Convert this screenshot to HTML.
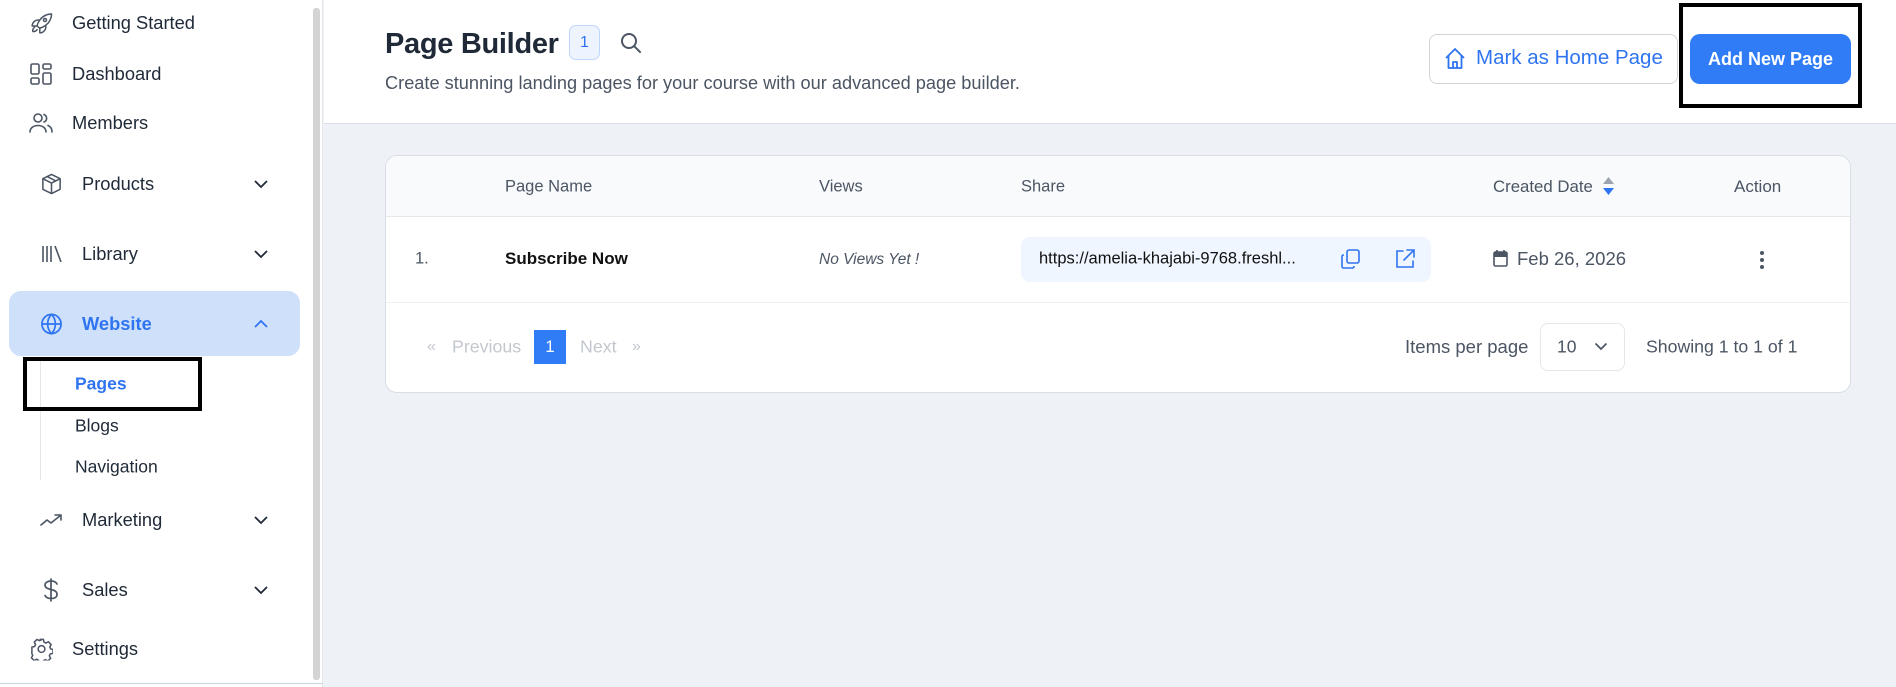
<!DOCTYPE html>
<html><head><meta charset="utf-8">
<style>
*{box-sizing:border-box;margin:0;padding:0}
body{width:1896px;height:687px;overflow:hidden;font-family:"Liberation Sans",sans-serif;background:#eef1f5;position:relative;color:#1f2937}
.a{position:absolute;white-space:nowrap}
.side{position:absolute;left:0;top:0;width:323px;height:687px;background:#fff;border-right:1px solid #e5e7eb}
.si{position:absolute;font-size:18.3px;font-weight:500;color:#1f2937;transform:translateY(-50%)}
.ic{position:absolute;transform:translateY(-50%)}
svg{display:block}
.chev{position:absolute;left:253px;transform:translateY(-50%)}
.th{font-size:16.5px;color:#4b5563;transform:translateY(-50%)}
</style></head><body>
<div class="side">
  <div style="position:absolute;left:313px;top:8px;width:7px;height:672px;background:#d4d4d4;border-radius:3px"></div>

  <svg class="ic" style="left:30px;top:23px" width="24" height="24" viewBox="0 0 24 24" fill="none" stroke="#4b5563" stroke-width="1.5" stroke-linecap="round" stroke-linejoin="round"><path d="M15.6 14.4a6 6 0 01-5.8 7.5v-4.8m5.8-2.7A14.9 14.9 0 0021.6 3 14.9 14.9 0 009.6 9.2m6 5.2a15 15 0 01-5.9 2.7m0-7.9a6 6 0 00-7.5 5.8h4.8m2.7-5.8a15 15 0 00-2.7 5.9m2.8 2A15 15 0 017 15m-2.4 1.2a4.5 4.5 0 00-1.8 4.3 4.5 4.5 0 004.3-1.8"/><circle cx="15" cy="9" r="1.5"/></svg>
  <div class="si" style="left:72px;top:23px">Getting Started</div>

  <svg class="ic" style="left:30px;top:74px" width="22" height="22" viewBox="0 0 22 22" fill="none" stroke="#4b5563" stroke-width="1.6"><rect x="1" y="1" width="8" height="10" rx="1.5"/><rect x="13" y="1" width="8" height="5" rx="1.5"/><rect x="1" y="15" width="8" height="6" rx="1.5"/><rect x="13" y="10" width="8" height="11" rx="1.5"/></svg>
  <div class="si" style="left:72px;top:74px">Dashboard</div>

  <svg class="ic" style="left:29px;top:123px" width="24" height="22" viewBox="0 0 24 22" fill="none" stroke="#4b5563" stroke-width="1.6" stroke-linecap="round"><circle cx="9" cy="6" r="4"/><path d="M1 20c0-4 3.5-6.5 8-6.5s8 2.5 8 6.5"/><path d="M15 2.5a4 4 0 010 7.5M19 13.5c2.5 1 4 3 4 6.5"/></svg>
  <div class="si" style="left:72px;top:123px">Members</div>

  <svg class="ic" style="left:40px;top:184px" width="23" height="23" viewBox="0 0 24 24" fill="none" stroke="#4b5563" stroke-width="1.6" stroke-linejoin="round"><path d="M12 2l9 4.5v11L12 22l-9-4.5v-11z"/><path d="M3 6.5L12 11l9-4.5M12 11v11M7.5 4.3l9 4.5"/></svg>
  <div class="si" style="left:82px;top:184px">Products</div>
  <svg class="chev" style="top:184px" width="16" height="10" viewBox="0 0 16 10" fill="none" stroke="#1f2937" stroke-width="1.8"><path d="M2 2l6 6 6-6"/></svg>

  <svg class="ic" style="left:41px;top:254px" width="22" height="18" viewBox="0 0 22 18" fill="none" stroke="#4b5563" stroke-width="1.6"><path d="M2 1v16M6 1v16M10 1v16M14 1l6 16"/></svg>
  <div class="si" style="left:82px;top:254px">Library</div>
  <svg class="chev" style="top:254px" width="16" height="10" viewBox="0 0 16 10" fill="none" stroke="#1f2937" stroke-width="1.8"><path d="M2 2l6 6 6-6"/></svg>

  <div style="position:absolute;left:9px;top:291px;width:291px;height:65px;background:#cfe0fb;border-radius:12px"></div>
  <svg class="ic" style="left:40px;top:324px" width="23" height="23" viewBox="0 0 24 24" fill="none" stroke="#2f74f0" stroke-width="1.8"><circle cx="12" cy="12" r="10"/><path d="M2 12h20M12 2c3 3 4 6.5 4 10s-1 7-4 10c-3-3-4-6.5-4-10s1-7 4-10z"/></svg>
  <div class="si" style="left:82px;top:324px;color:#2f74f0;font-weight:700">Website</div>
  <svg class="chev" style="top:324px" width="16" height="10" viewBox="0 0 16 10" fill="none" stroke="#2f74f0" stroke-width="1.8"><path d="M2 8l6-6 6 6"/></svg>

  <div style="position:absolute;left:40px;top:360px;width:1px;height:120px;background:#e5e7eb"></div>
  <div style="position:absolute;left:23px;top:357px;width:179px;height:54px;border:4px solid #000"></div>
  <div class="si" style="left:75px;top:384px;color:#2f74f0;font-weight:700;font-size:17.5px">Pages</div>
  <div class="si" style="left:75px;top:426px;font-size:17.5px">Blogs</div>
  <div class="si" style="left:75px;top:467px;font-size:17.5px">Navigation</div>

  <svg class="ic" style="left:40px;top:520px" width="24" height="14" viewBox="0 0 24 14" fill="none" stroke="#4b5563" stroke-width="1.6" stroke-linecap="round" stroke-linejoin="round"><path d="M1 12l6-5 4 3 10-8M15 2h6v5"/></svg>
  <div class="si" style="left:82px;top:520px">Marketing</div>
  <svg class="chev" style="top:520px" width="16" height="10" viewBox="0 0 16 10" fill="none" stroke="#1f2937" stroke-width="1.8"><path d="M2 2l6 6 6-6"/></svg>

  <svg class="ic" style="left:43px;top:590px" width="16" height="24" viewBox="0 0 16 24" fill="none" stroke="#4b5563" stroke-width="1.7" stroke-linecap="round"><path d="M8 1v22M14 6c-1-2-3-3-6-3S2 4.5 2 7s2 3.5 6 4.5 6 2 6 5-3 4-6 4-5-1-6-3"/></svg>
  <div class="si" style="left:82px;top:590px">Sales</div>
  <svg class="chev" style="top:590px" width="16" height="10" viewBox="0 0 16 10" fill="none" stroke="#1f2937" stroke-width="1.8"><path d="M2 2l6 6 6-6"/></svg>

  <svg class="ic" style="left:30px;top:649px" width="23" height="23" viewBox="0 0 24 24" fill="none" stroke="#4b5563" stroke-width="1.6"><path d="M10 2h4l.6 2.8 2 1 2.6-1.3 2.8 2.8-1.3 2.6.9 2 2.4.6v4l-2.8.6-1 2 1.3 2.6-2.8 2.8-2.6-1.3-2 .9-.6 2.4h-4l-.6-2.8-2-1-2.6 1.3-2.8-2.8 1.3-2.6-.9-2L2 14v-4l2.8-.6 1-2L4.5 4.8l2.8-2.8 2.6 1.3 2-.9z"/><circle cx="12" cy="12" r="3.5"/></svg>
  <div class="si" style="left:72px;top:649px">Settings</div>
  <div style="position:absolute;left:0;top:683px;width:323px;height:1px;background:#d1d5db"></div>
</div>

<!-- header -->
<div style="position:absolute;left:324px;top:0;width:1572px;height:124px;background:#fff;border-bottom:1px solid #d9dee6"></div>
<div class="a" style="left:385px;top:28px;font-size:29px;font-weight:700;color:#1f2937;letter-spacing:-0.3px">Page Builder</div>
<div class="a" style="left:569px;top:25px;width:31px;height:35px;border:1px solid #bfd6fb;background:#eef4ff;border-radius:7px;color:#2f74f0;font-size:16px;text-align:center;line-height:33px">1</div>
<svg class="a" style="left:620px;top:32px" width="22" height="22" viewBox="0 0 22 22" fill="none" stroke="#4b5563" stroke-width="2" stroke-linecap="round"><circle cx="9" cy="9" r="7"/><path d="M14 14l6 6"/></svg>
<div class="a" style="left:385px;top:73px;font-size:18.2px;color:#4b5563">Create stunning landing pages for your course with our advanced page builder.</div>

<div class="a" style="left:1429px;top:34px;width:249px;height:50px;border:1px solid #d1d5db;border-radius:8px;background:#fff"></div>
<svg class="a" style="left:1444px;top:47px" width="22" height="23" viewBox="0 0 22 23" fill="none" stroke="#2f74f0" stroke-width="1.8" stroke-linejoin="round"><path d="M2 11L11 2l9 9M4.5 9v12h13V9M9 21v-6h4v6"/></svg>
<div class="a" style="left:1476px;top:46px;font-size:20.5px;color:#2f74f0">Mark as Home Page</div>
<div class="a" style="left:1690px;top:34px;width:161px;height:50px;border-radius:10px;background:#2f7cf6;color:#fff;font-weight:700;font-size:18px;text-align:center;line-height:50px">Add New Page</div>
<div class="a" style="left:1679px;top:3px;width:183px;height:105px;border:4px solid #000"></div>

<!-- table -->
<div class="a" style="left:385px;top:155px;width:1466px;height:238px;background:#fff;border:1px solid #d9dee6;border-radius:12px;overflow:hidden">
  <div style="position:absolute;left:0;top:0;width:100%;height:61px;background:#f8fafc;border-bottom:1px solid #e5e7eb"></div>
  <div style="position:absolute;left:0;top:146px;width:100%;height:1px;background:#eef0f3"></div>
</div>
<div class="a th" style="left:505px;top:187px">Page Name</div>
<div class="a th" style="left:819px;top:187px">Views</div>
<div class="a th" style="left:1021px;top:187px">Share</div>
<div class="a th" style="left:1493px;top:187px;font-size:16.8px">Created Date</div>
<svg class="a" style="left:1602px;top:176px" width="13" height="20" viewBox="0 0 13 20"><path d="M6.5 1L12 8H1z" fill="#9ca3af"/><path d="M6.5 19L12 12H1z" fill="#2f74f0"/></svg>
<div class="a th" style="left:1734px;top:187px;font-size:17px">Action</div>

<div class="a" style="left:415px;top:259px;transform:translateY(-50%);font-size:16.5px;color:#4b5563">1.</div>
<div class="a" style="left:505px;top:259px;transform:translateY(-50%);font-size:17px;font-weight:700;color:#111">Subscribe Now</div>
<div class="a" style="left:819px;top:260px;transform:translateY(-50%);font-size:15.5px;font-style:italic;color:#4b5563">No Views Yet !</div>
<div class="a" style="left:1021px;top:237px;width:410px;height:45px;background:#f0f6ff;border-radius:9px"></div>
<div class="a" style="left:1039px;top:259px;transform:translateY(-50%);font-size:16.5px;color:#111">https://amelia-khajabi-9768.freshl...</div>
<svg class="a" style="left:1340px;top:248px" width="22" height="22" viewBox="0 0 22 22" fill="none" stroke="#2f74f0" stroke-width="1.6"><rect x="7" y="2" width="12" height="13" rx="2"/><path d="M4 7H3.5A1.5 1.5 0 002 8.5v10A1.5 1.5 0 003.5 20h9a1.5 1.5 0 001.5-1.5V18"/></svg>
<svg class="a" style="left:1394px;top:248px" width="22" height="22" viewBox="0 0 22 22" fill="none" stroke="#2f74f0" stroke-width="1.6" stroke-linecap="round"><path d="M9 3H3v16h16v-6M13 2h7v7M20 2L10 12"/></svg>
<svg class="a" style="left:1493px;top:249px" width="15" height="18" viewBox="0 0 15 18"><rect x="1" y="3" width="13" height="14" rx="1.5" fill="none" stroke="#4b5563" stroke-width="1.6"/><rect x="1" y="3" width="13" height="5" fill="#4b5563"/><path d="M4 1v3M11 1v3" stroke="#4b5563" stroke-width="1.6"/></svg>
<div class="a" style="left:1517px;top:259px;transform:translateY(-50%);font-size:18.5px;color:#4b5563">Feb 26, 2026</div>
<svg class="a" style="left:1759px;top:250px" width="6" height="20" viewBox="0 0 6 20" fill="#4b5563"><circle cx="3" cy="3" r="2"/><circle cx="3" cy="10" r="2"/><circle cx="3" cy="17" r="2"/></svg>

<div class="a" style="left:427px;top:347px;transform:translateY(-50%);font-size:16px;color:#c3c8cf">«</div>
<div class="a" style="left:452px;top:347px;transform:translateY(-50%);font-size:17.8px;color:#c3c8cf">Previous</div>
<div class="a" style="left:534px;top:330px;width:32px;height:34px;background:#2f7cf6;color:#fff;font-size:17px;text-align:center;line-height:34px">1</div>
<div class="a" style="left:580px;top:347px;transform:translateY(-50%);font-size:17.8px;color:#c3c8cf">Next</div>
<div class="a" style="left:632px;top:347px;transform:translateY(-50%);font-size:16px;color:#c3c8cf">»</div>

<div class="a" style="left:1405px;top:347px;transform:translateY(-50%);font-size:18.5px;color:#4b5563">Items per page</div>
<div class="a" style="left:1540px;top:323px;width:85px;height:48px;border:1px solid #e5e7eb;border-radius:8px;background:#fff"></div>
<div class="a" style="left:1557px;top:347px;transform:translateY(-50%);font-size:17.5px;color:#4b5563">10</div>
<svg class="a" style="left:1594px;top:342px" width="14" height="9" viewBox="0 0 14 9" fill="none" stroke="#4b5563" stroke-width="1.7"><path d="M1.5 1.5l5.5 5.5 5.5-5.5"/></svg>
<div class="a" style="left:1646px;top:347px;transform:translateY(-50%);font-size:17.7px;color:#4b5563">Showing 1 to 1 of 1</div>
</body></html>
